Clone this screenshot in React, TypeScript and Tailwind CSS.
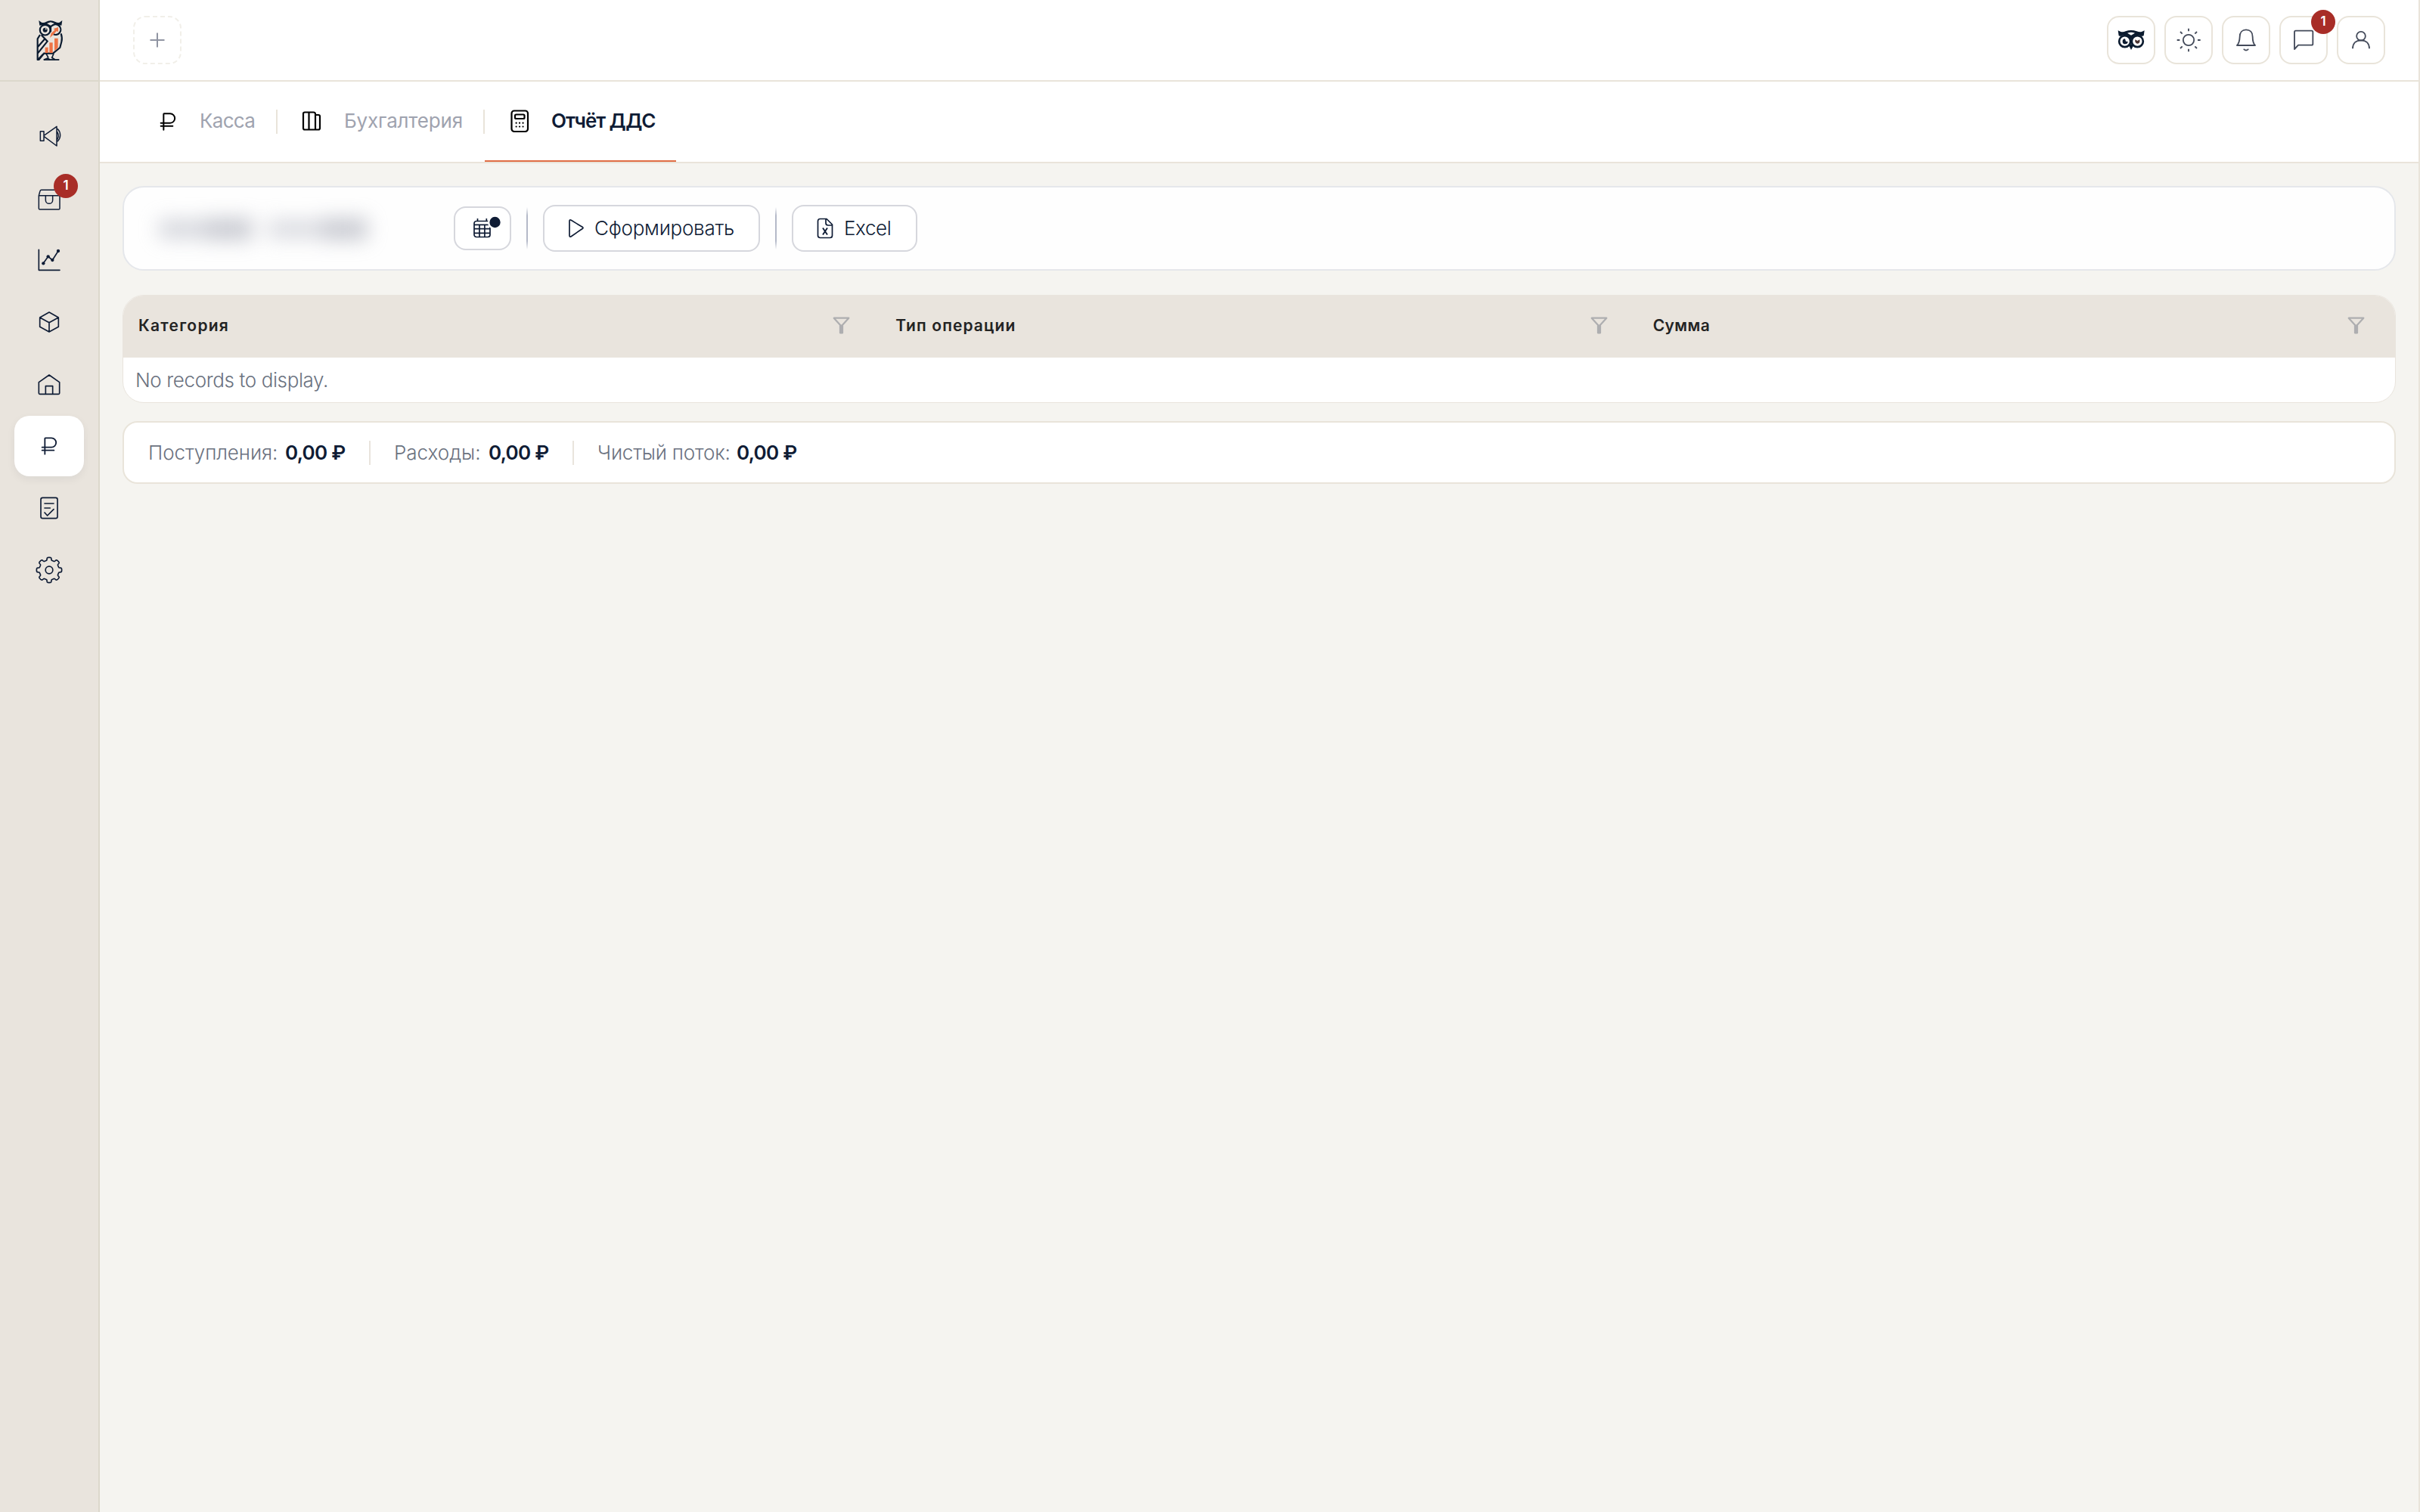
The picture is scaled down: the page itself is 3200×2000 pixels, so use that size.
import React from "react";

const NAVY = "#0f1c35";

type IconProps = { box: string; color?: string; sw?: number; size?: string; children: React.ReactNode };

function Icon({ box, color = NAVY, sw = 4.5, size = "size-9", children }: IconProps) {
  return (
    <svg viewBox={box} className={`${size} shrink-0`} fill="none" stroke={color} strokeWidth={sw} strokeLinecap="round" strokeLinejoin="round">
      {children}
    </svg>
  );
}

// Eight-lobed cog outline around a centre point.
function gearPath(cx: number, cy: number) {
  const pts: string[] = [];
  for (let i = 0; i < 320; i++) {
    const a = (i / 320) * Math.PI * 2;
    const r = 44.5 + 5.5 * Math.tanh(2.2 * Math.cos(8 * a));
    const w = a + 0.02 * Math.sin(16 * a);
    pts.push(`${(cx + r * Math.sin(w)).toFixed(2)} ${(cy - r * Math.cos(w)).toFixed(2)}`);
  }
  return `M${pts.join("L")}Z`;
}

const Ruble = ({ color, sw = 6 }: { color: string; sw?: number }) => (
  <Icon box="612 426 108 108" color={color} sw={sw}>
    <path d="M649 512V450q0-2 2-2H675a18.500 18.500 0 0 1 0 37H638M638 497H685" />
  </Icon>
);

const Megaphone = () => (
  <Icon box="141 486 108 108">
    <path d="M160 521h14v38h-14zM174 538L225 502V579L174 541M229 512a34 34 0 0 1 0 48M227 523q9 16 0 31" />
  </Icon>
);

const Parcel = () => (
  <Icon box="141 732 108 108">
    <path d="M154 776V827q0 4 4 4H233q4 0 4-4V776ZM154 776L159 758q1-4 5-4H227q4 0 5 4L237 776M181 776V794a14 14 0 0 0 28 0V776" />
  </Icon>
);

const Chart = () => (
  <Icon box="141 78 108 108" sw={5}>
    <path d="M154 91V172H237M172 145L191 118L208 132L231 96" />
    <g fill={NAVY} stroke="none">
      <circle cx="172" cy="145" r="6.500" />
      <circle cx="191" cy="118" r="6.500" />
      <circle cx="208" cy="132" r="6.500" />
      <circle cx="231" cy="96" r="6.500" />
    </g>
  </Icon>
);

const Cube = () => (
  <Icon box="141 324 108 108" sw={5}>
    <path d="M195 339L232 360V397L195 417L158 397V360ZM158 360L195 380L232 360M195 380V417" />
  </Icon>
);

const House = () => (
  <Icon box="141 570 108 108" sw={5}>
    <path d="M154 617L195 588L236 617V660q0 4-4 4H158q-4 0-4-4ZM181 664V632H209V664" />
  </Icon>
);

const Report = () => (
  <Icon box="141 342 108 108" sw={5}>
    <rect x="162" y="355" width="66" height="82" rx="7" />
    <path d="M177 378H213M177 396H199M177 414L188 426L213 401" />
  </Icon>
);

const Gear = () => (
  <Icon box="141 588 108 108" sw={5}>
    <path d={gearPath(195, 642)} />
    <circle cx="195" cy="642" r="14.500" />
  </Icon>
);

const OwlLogo = () => (
  <svg viewBox="139 74 111 168" className="h-14 w-[37px]" fill="none" stroke="#0b1b2f" strokeWidth="6.500" strokeLinejoin="miter">
    <path d="M152 80L163 88Q174 90 180 86Q198 75 218 86Q226 90 234 88L245 80L242 100L233 99Q222 95 212 99L199 109L186 99Q176 95 165 99L155 100Z" fill="#0b1b2f" stroke="none" />
    <path d="M184 92L199 87L214 92L199 100Z" fill="#e9e4dd" stroke="none" />
    <circle cx="177" cy="118" r="20.500" />
    <path d="M206 100A20.500 20.500 0 1 1 210 135" />
    <path d="M199 106V126" />
    <circle cx="177" cy="118" r="9" fill="#0b1b2f" stroke="none" />
    <circle cx="180" cy="114" r="3" fill="#e9e4dd" stroke="none" />
    <path d="M240 132Q246 150 242 165L236 188L208 211H170" />
    <path d="M157 137L147 153V236M162 138L186 163L148 210M148 185L175 154M148 236L172 211" />
    <path d="M143 239H154L174 214H165Z" fill="#0b1b2f" stroke="none" />
    <path d="M181 212L190 228M211 212L204 228L216 235M172 236L187 230L196 236" strokeWidth="5" />
    <path d="M171 236H233" strokeWidth="5.500" />
    <g fill="#ee7446" stroke="none">
      <rect x="177" y="187" width="12" height="22" />
      <rect x="194" y="168" width="13" height="41" />
      <path d="M214 151H228V189L214 201ZM196 149L201 131L215 118L211 113L229 107V126L223 122L208 138Z" />
    </g>
  </svg>
);

const OwlFace = () => (
  <Icon box="120 105 108 108" color="#0b1b2f" sw={8}>
    <path d="M122 121L133 126Q144 128 152 124Q174 116 196 124Q206 128 216 126L227 121L224 142L216 144Q200 134 190 144L174 157L158 144Q148 134 132 144L125 142Z" fill="#0b1b2f" stroke="none" />
    <circle cx="149" cy="164" r="22.500" fill="#ffffff" />
    <circle cx="199" cy="164" r="22.500" fill="#ffffff" />
    <path d="M159 131Q174 125 189 131L174 140Z" fill="#ffffff" stroke="none" />
    <path d="M150 154a10.500 10.500 0 1 0 11 11l-8-1z" fill="#0b1b2f" stroke="none" />
    <path d="M190 157l4 2 5 3 5-3 4-2q2 8-2 13-7 6-13 0-5-5-3-13z" fill="#4a3230" stroke="none" />
    <path d="M165 180L174 174L184 180L174 198Z" fill="#0b1b2f" stroke="none" />
  </Icon>
);

const SLATE = "#434a5a";

const Sun = () => (
  <Icon box="348 105 108 108" color={SLATE} sw={5.5}>
    <circle cx="402" cy="159" r="21.500" />
    <path strokeLinecap="butt" d="M402 113V124M402 194V205M356 159H367M438 159H449M369 126L377 134M427 184L435 192M369 192L377 184M427 134L435 126" />
  </Icon>
);
const Bell = () => (
  <Icon box="576 105 108 108" color={SLATE} sw={5.5}>
    <path d="M594 180H666Q656 170 656 146C656 128 645 118 630 118S605 128 605 146Q604 170 594 180ZM622 196Q630 203 638 196" />
  </Icon>
);
const Chat = () => (
  <Icon box="804 105 108 108" color={SLATE} sw={5.5}>
    <path d="M822 195V127q0-5 5-5H890q5 0 5 5V174q0 5-5 5H837Z" />
  </Icon>
);
const User = () => (
  <Icon box="1032 105 108 108" color={SLATE} sw={5.5}>
    <circle cx="1086" cy="143" r="17.500" />
    <path d="M1053 193C1053 172 1066 160 1086 160S1119 172 1119 193" strokeLinecap="butt" />
  </Icon>
);

const Books = () => (
  <Icon box="0 0 36 36" color="#000000" sw={2.2}>
    <path d="M8 5.500H19.500q2.500 0 2.500 2.500V28.500H8q-2 0-2-2V7.500q0-2 2-2ZM13.500 5.500V28.500M22 9H26q2 0 2 2V26.500q0 2-2 2H22" />
  </Icon>
);
const Calculator = () => (
  <Icon box="0 0 36 36" color="#000000" sw={2.2}>
    <rect x="7.500" y="3.500" width="21.500" height="27.500" rx="3.500" />
    <rect x="12" y="8.500" width="12.500" height="5.500" rx="1.500" />
    <path d="M13.600 19.700h.1M18 19.700h.1M22.500 19.700h.1M13.600 24.500h.1M18 24.500h.1M22.500 24.500h.1" strokeWidth="2.200" />
  </Icon>
);

const Funnel = () => (
  <svg viewBox="67 149 68 68" className="size-[23px] shrink-0" fill="none" stroke="#aeaeb0" strokeWidth="6.500" strokeLinejoin="round">
    <path d="M72 154H130L101 186Z" />
    <path d="M96.500 184H105.500V212H96.500Z" fill="#aeaeb0" />
  </svg>
);

const CalendarIcon = () => (
  <svg viewBox="-5.500 0 48 36" className="h-9 w-12" fill="none" stroke={NAVY} strokeWidth="1.700" strokeLinejoin="round">
    <rect x="7.500" y="8.500" width="21" height="21" rx="3" />
    <path d="M12 5V8.500M23.800 5V8.500M7.500 13.300H28.500M7.500 18.700H28.500M7.500 24.300H28.500M14.500 13.300V29.500M21.400 13.300V29.500" />
    <circle cx="35" cy="10" r="9.600" fill="#ffffff" stroke="none" />
    <circle cx="35" cy="10" r="7.200" fill={NAVY} stroke="none" />
  </svg>
);

const Badge = ({ className }: { className: string }) => (
  <span className={`absolute flex size-8 items-center justify-center rounded-full bg-[#a82d27] text-[17px] font-semibold text-white ${className}`}>1</span>
);

const nav: { icon: React.ReactNode; active?: boolean; badge?: boolean }[] = [
  { icon: <Megaphone /> },
  { icon: <Parcel />, badge: true },
  { icon: <Chart /> },
  { icon: <Cube /> },
  { icon: <House /> },
  { icon: <Ruble color={NAVY} sw={5.5} />, active: true },
  { icon: <Report /> },
  { icon: <Gear /> },
];

function Tab({ icon, label, className, active }: { icon: React.ReactNode; label: string; className: string; active?: boolean }) {
  return (
    <div className="relative flex h-[106px] items-center pl-7 pr-[26px]">
      {icon}
      <span className={`-mt-1 ml-6 whitespace-nowrap text-[26px] ${className}`}>{label}</span>
      {active && <span className="absolute inset-x-0 bottom-0 h-0.5 bg-[#e06d45]" />}
    </div>
  );
}

function HeaderButton({ children, badge }: { children: React.ReactNode; badge?: boolean }) {
  return (
    <div className="relative flex size-16 items-center justify-center rounded-2xl border-2 border-[#e9e4da] bg-white">
      {children}
      {badge && <Badge className="-top-[10px] left-[40px]" />}
    </div>
  );
}

const columns = [
  { label: "Категория", tracking: "tracking-[1.25px]" },
  { label: "Тип операции", tracking: "tracking-[1.1px]" },
  { label: "Сумма", tracking: "tracking-[0.4px]" },
];

const totals = [
  { label: "Поступления:", value: "0,00 ₽", width: "w-[181px]", tracking: "tracking-[-0.1px]" },
  { label: "Расходы:", value: "0,00 ₽", width: "w-[125px]", tracking: "tracking-normal" },
  { label: "Чистый поток:", value: "0,00 ₽", width: "w-[184px]", tracking: "tracking-[-0.2px]" },
];

const GroupLine = ({ className }: { className: string }) => (
  <span className={`h-14 w-0.5 bg-[linear-gradient(to_bottom,transparent,#b4b9c8_20%,#b4b9c8_80%,transparent)] ${className}`} />
);

export default function App() {
  return (
    <div className="flex h-[2000px] w-[3200px] overflow-hidden border-r-2 border-[#e9e4da] bg-[#f5f4f0] font-['Inter',sans-serif] text-[#0f1c35]">
      <aside className="flex w-[132px] shrink-0 flex-col border-r-2 border-[#dcd8cc] bg-[#e9e4dd]">
        <div className="flex h-[108px] items-center justify-center border-b-2 border-[#dcd8cc]">
          <OwlLogo />
        </div>
        <nav className="mt-8 flex flex-col items-center gap-0.5">
          {nav.map((item, i) => (
            <div
              key={i}
              className={`relative flex h-20 w-[92px] items-center justify-center rounded-[20px] ${item.active ? "bg-white shadow-[0_4px_12px_rgba(15,28,53,0.06)]" : ""}`}
            >
              {item.icon}
              {item.badge && <Badge className="left-[52px] top-2" />}
            </div>
          ))}
        </nav>
      </aside>

      <div className="flex min-w-0 flex-1 flex-col">
        <header className="flex h-[108px] items-center justify-between border-b-2 border-[#e9e4da] bg-white pl-11 pr-11">
          <svg viewBox="0 0 64 64" className="size-16" fill="none">
            <rect x="1" y="1" width="62" height="62" rx="15" stroke="#f1efe9" strokeWidth="2" strokeDasharray="6 4" />
            <path d="M32 22.500V41.500M22.500 32H41.500" stroke="#9094a2" strokeWidth="2" />
          </svg>
          <div className="flex gap-3">
            <HeaderButton><OwlFace /></HeaderButton>
            <HeaderButton><Sun /></HeaderButton>
            <HeaderButton><Bell /></HeaderButton>
            <HeaderButton badge><Chat /></HeaderButton>
            <HeaderButton><User /></HeaderButton>
          </div>
        </header>

        <div className="flex h-[108px] items-center border-b-2 border-[#e9e4da] bg-white pl-11">
          <Tab icon={<Ruble color="#000000" />} label="Касса" className="w-[75px] font-[380] tracking-[-0.7px] text-[#9fa3af]" />
          <span className="h-8 w-0.5 bg-[#e9e4da]" />
          <Tab icon={<Books />} label="Бухгалтерия" className="w-[158px] font-[380] tracking-[-0.2px] text-[#9fa3af]" />
          <span className="h-8 w-0.5 bg-[#e9e4da]" />
          <Tab icon={<Calculator />} label="Отчёт ДДС" className="w-[139px] font-[560] tracking-[-1.05px]" active />
        </div>

        <main className="flex flex-col pl-[30px] pr-[30px] pt-[30px]">
          <section className="flex h-28 items-center rounded-[28px] border-2 border-[#e5e7eb] bg-[#fefefe]">
            <div className="flex w-[436px] items-center pl-[46px]">
              <div className="mt-0.5 flex w-[288px] items-center opacity-55 blur-[13px]">
                <span className="h-[26px] w-[62px] bg-[#b6b9c4]" />
                <span className="h-[30px] w-[62px] bg-[#a0a3b0]" />
                <span className="ml-5 h-[26px] w-[72px] bg-[#c0c2cc]" />
                <span className="h-[30px] w-[60px] bg-[#a0a3b0]" />
              </div>
            </div>
            <div className="flex h-[58px] w-[76px] items-center justify-center rounded-2xl border-2 border-[#d6d7dd] bg-white">
              <CalendarIcon />
            </div>
            <GroupLine className="ml-5" />
            <div className="ml-5 flex h-[62px] w-[287px] items-center whitespace-nowrap rounded-2xl border-2 border-[#d6d7dd] bg-white pl-[31px] text-[26px] font-[350] tracking-[-0.25px]">
              <svg viewBox="0 0 22 26" className="h-[26px] w-[22px]" fill="none" stroke={NAVY} strokeWidth="1.700" strokeLinejoin="round">
                <path d="M2 3.500Q2 1 4.300 2.300L19.500 11.600Q20.500 12.400 19.500 13.200L4.300 23.700Q2 25 2 22.500Z" />
              </svg>
              <span className="-mt-0.5 ml-[13px]">Сформировать</span>
            </div>
            <GroupLine className="ml-5" />
            <div className="ml-5 flex h-[62px] w-[166px] items-center whitespace-nowrap rounded-2xl border-2 border-[#d6d7dd] bg-white pl-[31px] text-[26px] font-[350] tracking-[-0.4px]">
              <svg viewBox="0 0 22 28" className="h-7 w-[22px]" fill="none" stroke={NAVY} strokeWidth="1.700" strokeLinejoin="round">
                <path d="M4.500 1.500H13L20.500 9V23.500q0 3-3 3H4.500q-3 0-3-3V4.500q0-3 3-3ZM12 1.500V7q0 3 3 3H20.500" />
                <path d="M8 13.500L14 22.500M14 13.500L8 22.500" strokeWidth="1.900" />
              </svg>
              <span className="-mt-0.5 ml-[14px]">Excel</span>
            </div>
          </section>

          <section className="mt-8 h-[143px] overflow-hidden rounded-[28px] border border-[#e9e4dd] bg-white">
            <div className="grid h-[82px] grid-cols-3 bg-[#e9e4dd]">
              {columns.map((c) => (
                <div key={c.label} className="flex items-center justify-between pb-[3px] pl-5 pr-10">
                  <span className={`text-[21px] font-[560] text-[#232323] ${c.tracking}`}>{c.label}</span>
                  <Funnel />
                </div>
              ))}
            </div>
            <div className="flex h-[59px] items-center pl-4 text-[26px] font-light tracking-[-0.38px] text-[#6b7280]">No records to display.</div>
          </section>

          <section className="mt-6 flex h-[83px] items-center rounded-[20px] border-2 border-[#e9e4da] bg-white pl-8 text-[26px]">
            {totals.map((t, i) => (
              <React.Fragment key={t.label}>
                {i > 0 && <span className="ml-[30px] mr-[31px] h-8 w-0.5 bg-[#e9e4dd]" />}
                <span className={`whitespace-nowrap font-light text-[#6b7280] ${t.width} ${t.tracking}`}>{t.label}</span>
                <span className="w-[81px] whitespace-nowrap font-[560] tracking-[-0.7px]">{t.value}</span>
              </React.Fragment>
            ))}
          </section>
        </main>
      </div>
    </div>
  );
}
